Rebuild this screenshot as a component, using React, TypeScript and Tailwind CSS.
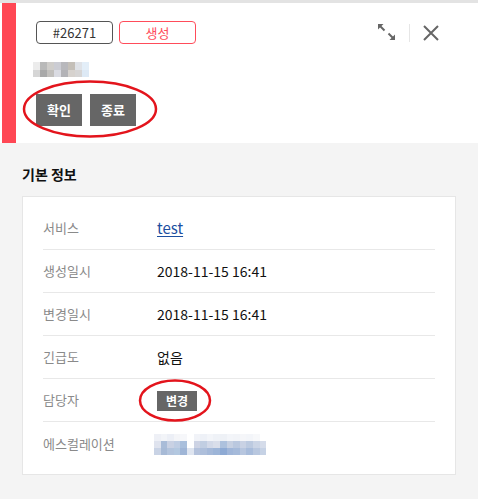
import React from "react";

// pixelated (blurred) placeholders for masked values
const nameBlocks = [
  ["#ececec", "#b9b9b9", "#cfcdca", "#cbccd3", "#b8b8bc", "#c4bfb8", "#dfe2e7", "#e3eef8"],
  ["#d6d6d6", "#a9a9a9", "#c2c0bd", "#dadbe2", "#b3b3b7", "#d6d2ce", "#d6d5d5", "#dde9f5"],
];

const escBlocks = [
  ["#eef0f6", "#f2f4f8", "#eceff6", "#f4f5f8", "#f6f7fa", "#ffffff", "#f1f3f8", "#eef1f7", "#f3f5f9", "#eff2f7", "#eef1f6", "#f3f5f9", "#f2f4f8", "#f5f6f9", "#f3f5f9", "#f7f8fa", "#ffffff"],
  ["#dfe3ee", "#a9bcd8", "#c9d1e3", "#bfcde3", "#a9bfdc", "#ffffff", "#cdd3e4", "#c1cee2", "#d2d9e8", "#d9deea", "#adc1dd", "#c6d0e2", "#bac8df", "#c9d2e4", "#bccae0", "#cbd5e6", "#d5dcea"],
  ["#c9d3e5", "#a7bad6", "#b3c4dd", "#b3c8e0", "#9fb5d6", "#dfe5f0", "#b4c2dc", "#aebfdb", "#a5b9d9", "#9db5d8", "#8eaad4", "#a0b6d9", "#a5bada", "#b7c6df", "#a8bcdb", "#b8c7df", "#c6d2e5"],
];

const Pixels = ({ rows, size, h }: { rows: string[][]; size: number; h: number }) => (
  <div className="flex flex-col">
    {rows.map((row, i) => (
      <div key={i} className="flex">
        {row.map((c, j) => (
          <div key={j} style={{ background: c, width: size, height: h }} />
        ))}
      </div>
    ))}
  </div>
);

const ExpandIcon = () => (
  <svg width="18" height="17" viewBox="0 0 18 17">
    <path d="M0 0 H5.5 L0 5.5 Z" fill="#666" />
    <path d="M2 2 L6.5 6.5" stroke="#666" strokeWidth="2" />
    <path d="M17 16 H11.5 L17 10.5 Z" fill="#666" />
    <path d="M15 14 L10.5 9.5" stroke="#666" strokeWidth="2" />
  </svg>
);

const CloseIcon = () => (
  <svg width="16" height="16" viewBox="0 0 16 16">
    <path d="M1 1 L15 15 M15 1 L1 15" stroke="#666" strokeWidth="2" />
  </svg>
);

const rows: { label: string; value: React.ReactNode }[] = [
  {
    label: "서비스",
    value: <a className="text-[15px] text-[#1d4f9f] underline underline-offset-2 cursor-pointer">test</a>,
  },
  { label: "생성일시", value: "2018-11-15 16:41" },
  { label: "변경일시", value: "2018-11-15 16:41" },
  { label: "긴급도", value: "없음" },
  {
    label: "담당자",
    value: (
      <button className="h-[20px] w-[40px] bg-[#666] text-white text-[12px] font-bold leading-[20px]">
        변경
      </button>
    ),
  },
  {
    label: "에스컬레이션",
    value: (
      <div className="-ml-[3px] mt-[2px]">
        <Pixels rows={escBlocks} size={6.6} h={7} />
      </div>
    ),
  },
];

const App = () => {
  return (
    <div className="relative w-[478px] h-[499px] bg-[#f4f4f4] font-['Noto_Sans_CJK_KR','Noto_Sans',sans-serif] text-[#111]">
      <div className="h-[3px] bg-[#e3e3e3]" />

      {/* header */}
      <div className="flex h-[140px] bg-white pl-[2px]">
        <div className="w-[14px] bg-[#ff4754]" />
        <div className="flex-1 pl-[20px] pr-[39px] pt-[18px]">
          <div className="flex items-center justify-between">
            <div className="flex gap-[6px]">
              <span className="flex h-[23px] w-[77px] items-center justify-center rounded-[4px] border border-[#555] text-[13px] text-[#333]">
                #26271
              </span>
              <span className="flex h-[23px] w-[77px] items-center justify-center rounded-[4px] border border-[#ff4c5a] text-[13px] text-[#ff4c5a]">
                생성
              </span>
            </div>
            <div className="flex items-center">
              <ExpandIcon />
              <div className="mx-[13px] h-[18px] w-px bg-[#e6e6e6]" />
              <CloseIcon />
            </div>
          </div>

          <div className="mt-[18px] -ml-[3px]">
            <Pixels rows={nameBlocks} size={7} h={7.5} />
          </div>

          <div className="mt-[17px] flex gap-[8px]">
            <button className="h-[32px] w-[46px] bg-[#666] text-[13px] font-bold text-white">확인</button>
            <button className="h-[32px] w-[46px] bg-[#666] text-[13px] font-bold text-white">종료</button>
          </div>
        </div>
      </div>

      {/* basic info */}
      <div className="px-[22px] pt-[21px]">
        <h3 className="text-[14px] font-bold leading-[20px] text-[#111]">기본 정보</h3>
        <div className="mt-[12px] border border-[#e6e6e6] bg-white px-[20px] pt-[10px] pb-[9px]">
          {rows.map((r, i) => (
            <div
              key={r.label}
              className={`flex h-[43px] items-center ${i < rows.length - 1 ? "border-b border-[#e8e8e8]" : ""}`}
            >
              <div className="w-[114px] text-[13px] text-[#8a8a8a]">{r.label}</div>
              <div className="text-[14px] text-[#111]">{r.value}</div>
            </div>
          ))}
        </div>
      </div>

      {/* red annotation circles */}
      <svg className="pointer-events-none absolute left-0 top-0" width="478" height="499">
        <ellipse cx="90" cy="109" rx="66" ry="27.5" fill="none" stroke="#e3141c" strokeWidth="2.5" />
        <ellipse cx="175" cy="400.5" rx="35" ry="20" fill="none" stroke="#e3141c" strokeWidth="2.5" />
      </svg>
    </div>
  );
};

export default App;
